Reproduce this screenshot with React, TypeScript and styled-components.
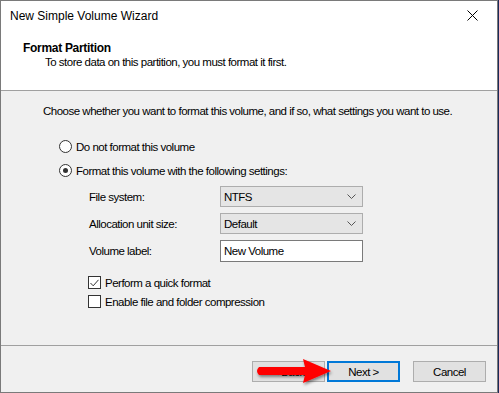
import styled, { createGlobalStyle } from "styled-components";

const Global = createGlobalStyle`
    html, body {
        margin: 0;
        padding: 0;
        background: #1b2a5a;
    }
    body {
        font-family: "Liberation Sans", Arial, sans-serif;
        font-size: 11.5px;
        letter-spacing: -0.5px;
        color: #000;
    }
`

const Window = styled.div`
    position: relative;
    width: 498px;
    height: 393px;
    box-sizing: border-box;
    border: 1px solid #7a7a7a;
    background: #f0f0f0;
    display: flex;
    flex-direction: column;
    overflow: hidden;
`

const Header = styled.div`
    height: 89px;
    background: #fff;
    border-bottom: 1px solid #a0a0a0;
    display: flex;
    flex-direction: column;
`

const TitleBar = styled.div`
    height: 29px;
    display: flex;
    align-items: center;
    justify-content: space-between;
    padding: 0 19px 0 9px;
    font-size: 12px;
    letter-spacing: 0;
`

const PageTitle = styled.div`
    margin: 11px 0 0 22px;
    font-weight: bold;
    font-size: 12px;
    letter-spacing: -0.3px;
`

const PageSub = styled.div`
    margin: 1px 0 0 44px;
`

const Body = styled.div`
    flex: 1;
    padding: 14px 0 0 42px;
    display: flex;
    flex-direction: column;
`

const Intro = styled.div`
    margin-bottom: 22px;
    white-space: nowrap;
`

const Options = styled.div`
    padding-left: 16px;
    display: flex;
    flex-direction: column;
    gap: 9px;
`

const OptionRow = styled.div`
    display: flex;
    align-items: center;
    gap: 4px;
    height: 15px;
`

const Radio = styled.span<{ checked?: boolean }>`
    width: 11px;
    height: 11px;
    border: 1px solid #333;
    border-radius: 50%;
    background: #fff;
    display: flex;
    align-items: center;
    justify-content: center;
    &::after {
        content: "";
        width: 5px;
        height: 5px;
        border-radius: 50%;
        background: ${p => (p.checked ? "#333" : "transparent")};
    }
`

const Settings = styled.div`
    margin: 8px 0 0 46px;
    display: grid;
    grid-template-columns: 131px 143px;
    row-gap: 6px;
    align-items: center;
`

const Label = styled.div``

const Combo = styled.div`
    height: 21px;
    box-sizing: border-box;
    border: 1px solid #adadad;
    background: #e5e5e5;
    display: flex;
    align-items: center;
    justify-content: space-between;
    padding: 0 6px 0 3px;
`

const TextBox = styled.div`
    height: 22px;
    box-sizing: border-box;
    border: 1px solid #7a7a7a;
    background: #fff;
    display: flex;
    align-items: center;
    padding: 0 3px;
`

const Checks = styled.div`
    margin: 13px 0 0 45px;
    display: flex;
    flex-direction: column;
    gap: 4px;
`

const Check = styled.span`
    width: 11px;
    height: 11px;
    border: 1px solid #333;
    background: #fff;
    display: flex;
    align-items: center;
    justify-content: center;
`

const Footer = styled.div`
    height: 47px;
    border-top: 1px solid #a0a0a0;
    display: flex;
    justify-content: flex-end;
    padding: 15px 11px 0 0;
    box-sizing: border-box;
    gap: 2px;
`

const Button = styled.div<{ focused?: boolean; gapLeft?: number }>`
    width: 73px;
    height: 21px;
    box-sizing: border-box;
    border: ${p => (p.focused ? "2px solid #0078d7" : "1px solid #adadad")};
    background: #e1e1e1;
    display: flex;
    align-items: center;
    justify-content: center;
    margin-left: ${p => p.gapLeft ?? 0}px;
`

const Arrow = styled.svg`
    position: absolute;
    left: 250px;
    top: 355px;
`

function Chevron() {
    return (
        <svg width="9" height="5" viewBox="0 0 9 5">
            <path d="M0.5 0.5 L4.5 4.5 L8.5 0.5" fill="none" stroke="#555" strokeWidth="1" />
        </svg>
    )
}

export default function App() {
    return (
        <>
            <Global />
            <Window>
                <Header>
                    <TitleBar>
                        <span>New Simple Volume Wizard</span>
                        <svg width="11" height="11" viewBox="0 0 11 11">
                            <path d="M0.5 0.5 L10.5 10.5 M10.5 0.5 L0.5 10.5" stroke="#000" strokeWidth="1" />
                        </svg>
                    </TitleBar>
                    <PageTitle>Format Partition</PageTitle>
                    <PageSub>To store data on this partition, you must format it first.</PageSub>
                </Header>
                <Body>
                    <Intro>Choose whether you want to format this volume, and if so, what settings you want to use.</Intro>
                    <Options>
                        <OptionRow>
                            <Radio />
                            <span>Do not format this volume</span>
                        </OptionRow>
                        <OptionRow>
                            <Radio checked />
                            <span>Format this volume with the following settings:</span>
                        </OptionRow>
                    </Options>
                    <Settings>
                        <Label>File system:</Label>
                        <Combo>
                            <span>NTFS</span>
                            <Chevron />
                        </Combo>
                        <Label>Allocation unit size:</Label>
                        <Combo>
                            <span>Default</span>
                            <Chevron />
                        </Combo>
                        <Label>Volume label:</Label>
                        <TextBox>New Volume</TextBox>
                    </Settings>
                    <Checks>
                        <OptionRow>
                            <Check>
                                <svg width="9" height="8" viewBox="0 0 9 8">
                                    <path d="M0.5 4 L3.2 6.8 L8.5 0.8" fill="none" stroke="#333" strokeWidth="1" />
                                </svg>
                            </Check>
                            <span>Perform a quick format</span>
                        </OptionRow>
                        <OptionRow>
                            <Check />
                            <span>Enable file and folder compression</span>
                        </OptionRow>
                    </Checks>
                </Body>
                <Footer>
                    <Button>&lt; Back</Button>
                    <Button focused>Next &gt;</Button>
                    <Button gapLeft={11}>Cancel</Button>
                </Footer>
                <Arrow width="90" height="34" viewBox="0 0 90 34">
                    <defs>
                        <filter id="sh" x="-20%" y="-30%" width="140%" height="160%">
                            <feDropShadow dx="1" dy="2" stdDeviation="1.5" floodColor="#000" floodOpacity="0.45" />
                        </filter>
                    </defs>
                    <path
                        d="M8 11 L54 11 L52 3 L80 15 L52 27 L54 19 L8 19 Q4 15 8 11 Z"
                        fill="#f00"
                        filter="url(#sh)"
                    />
                </Arrow>
            </Window>
        </>
    )
}
